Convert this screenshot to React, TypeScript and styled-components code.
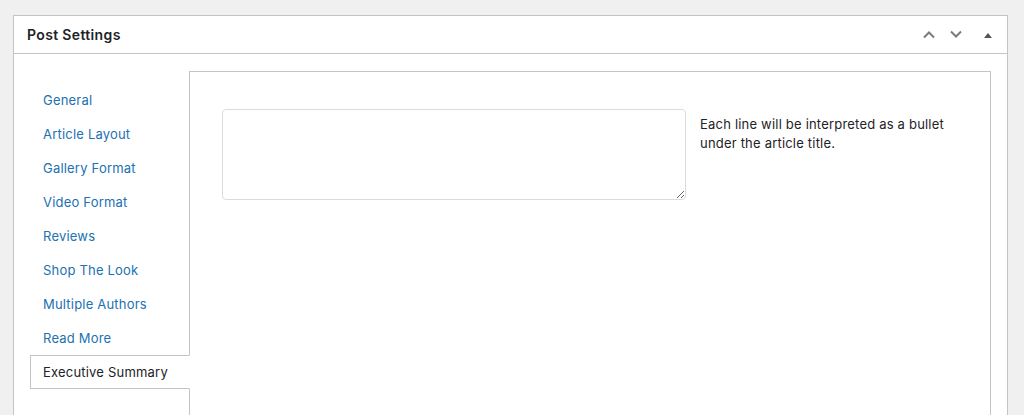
import React from "react";
import styled, { createGlobalStyle } from "styled-components";

const GlobalStyle = createGlobalStyle`
  html, body { margin: 0; padding: 0; }
  body {
    background: #f0f0f1;
    font-family: Inter, "Noto Sans", "Liberation Sans", sans-serif;
    font-size: 13px;
    letter-spacing: 0.2px;
    color: #1d2327;
  }
`;

const Page = styled.div`
  padding: 15px 16px 0 13px;
  height: 415px;
  box-sizing: border-box;
  overflow: hidden;
`;

const Postbox = styled.div`
  border: 1px solid #c3c4c7;
  background: #fff;
`;

const Header = styled.div`
  display: flex;
  align-items: center;
  height: 37px;
  border-bottom: 1px solid #c3c4c7;
`;

const Title = styled.h2`
  flex: 1;
  margin: 0;
  padding-left: 13px;
  font-size: 14px;
  font-weight: 600;
  letter-spacing: 0.35px;
  color: #1d2327;
  line-height: 1.4;
`;

const HandleButton = styled.button<{ $w: number }>`
  width: ${(p) => p.$w}px;
  height: 36px;
  padding: 0;
  border: 0;
  background: none;
  display: flex;
  align-items: center;
  justify-content: center;
  color: #787c82;
  cursor: pointer;
`;

const Body = styled.div`
  display: flex;
  padding: 17px 16px 0 0;
`;

const Tabs = styled.ul`
  list-style: none;
  margin: 0;
  padding: 12px 0 0 16px;
  width: 159px;
  flex-shrink: 0;
  position: relative;
  z-index: 1;
`;

const Tab = styled.li<{ $active?: boolean }>`
  height: 32px;
  line-height: 32px;
  padding-left: 12px;
  margin-right: -1px;
  border: 1px solid ${(p) => (p.$active ? "#c3c4c7" : "transparent")};
  border-right-color: ${(p) => (p.$active ? "#fff" : "transparent")};
  background: ${(p) => (p.$active ? "#fff" : "transparent")};
  color: ${(p) => (p.$active ? "#1d2327" : "#2271b1")};
  font-size: 13px;
  white-space: nowrap;
`;

const Panel = styled.div`
  flex: 1;
  min-width: 0;
  height: 380px;
  border: 1px solid #c3c4c7;
  padding: 37px 32px 0;
  display: flex;
  align-items: flex-start;
  gap: 14px;
`;

const Summary = styled.textarea`
  width: 464px;
  height: 91px;
  box-sizing: border-box;
  border: 1px solid #dcdcde;
  border-radius: 4px;
  font-family: inherit;
  font-size: 13px;
  margin: 0;
  flex-shrink: 0;
`;

const Description = styled.p`
  margin: 6px 0 0;
  flex: 0 1 268px;
  font-size: 13px;
  line-height: 19px;
  color: #1d2327;
`;

const tabs = [
  "General",
  "Article Layout",
  "Gallery Format",
  "Video Format",
  "Reviews",
  "Shop The Look",
  "Multiple Authors",
  "Read More",
  "Executive Summary",
];

export default function App() {
  return (
    <>
      <GlobalStyle />
      <Page>
        <Postbox>
          <Header>
            <Title>Post Settings</Title>
            <HandleButton $w={27} aria-label="Move up">
              <svg width="14" height="9" viewBox="0 0 14 9">
                <path d="M2 7.5 L7 2.5 L12 7.5" fill="none" stroke="currentColor" strokeWidth="2" />
              </svg>
            </HandleButton>
            <HandleButton $w={27} aria-label="Move down">
              <svg width="14" height="9" viewBox="0 0 14 9">
                <path d="M2 1.5 L7 6.5 L12 1.5" fill="none" stroke="currentColor" strokeWidth="2" />
              </svg>
            </HandleButton>
            <HandleButton $w={38} aria-label="Toggle panel">
              <svg width="10" height="6" viewBox="0 0 10 6">
                <path d="M1 6 L5 1 L9 6 Z" fill="#50575e" />
              </svg>
            </HandleButton>
          </Header>
          <Body>
            <Tabs>
              {tabs.map((t) => (
                <Tab key={t} $active={t === "Executive Summary"}>
                  {t}
                </Tab>
              ))}
            </Tabs>
            <Panel>
              <Summary />
              <Description>
                Each line will be interpreted as a bullet under the article title.
              </Description>
            </Panel>
          </Body>
        </Postbox>
      </Page>
    </>
  );
}
